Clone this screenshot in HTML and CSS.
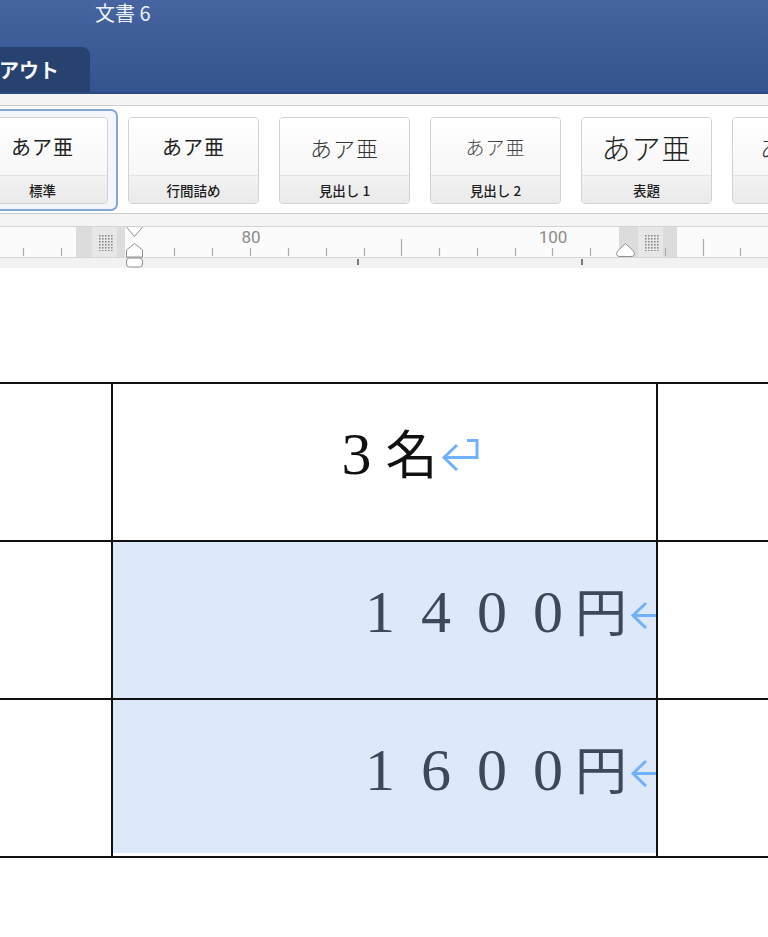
FILE: index.html
```html
<!DOCTYPE html>
<html lang="ja">
<head>
<meta charset="utf-8">
<title>文書 6</title>
<link rel="stylesheet" href="styles.css">
</head>
<body>
<header class="titlebar">
  <div class="title">文書 6</div>
  <nav class="tabs"><div class="tab">アウト</div></nav>
</header>

<div class="ribbon-head"></div>
<section class="styles">
  <div class="selected">
    <div class="card">
      <div class="sample s-normal">あア亜</div>
      <div class="label">標準</div>
    </div>
  </div>
  <div class="card">
    <div class="sample s-normal">あア亜</div>
    <div class="label">行間詰め</div>
  </div>
  <div class="card">
    <div class="sample s-h1">あア亜</div>
    <div class="label">見出し 1</div>
  </div>
  <div class="card">
    <div class="sample s-h2">あア亜</div>
    <div class="label">見出し 2</div>
  </div>
  <div class="card">
    <div class="sample s-title">あア亜</div>
    <div class="label">表題</div>
  </div>
  <div class="card">
    <div class="sample s-sub">あア亜</div>
    <div class="label">副題</div>
  </div>
</section>
<div class="ruler-head"></div>

<svg class="ruler" width="768" height="42" viewBox="0 0 768 42">
  <defs>
    <pattern id="grip" width="3" height="3" patternUnits="userSpaceOnUse">
      <rect width="1.6" height="1.6" fill="#8c8c8c"/>
    </pattern>
  </defs>
  <rect width="768" height="42" fill="#f2f2f2"/>
  <rect y="1" width="768" height="30" fill="#fbfbfb"/>
  <line x1="0" y1="0.5" x2="768" y2="0.5" stroke="#d3d3d3"/>
  <line x1="0" y1="31.5" x2="768" y2="31.5" stroke="#d6d6d6"/>

  <!-- left margin -->
  <rect x="76" y="1" width="49" height="30" fill="#dcdcdc"/>
  <rect x="92" y="1" width="25" height="30" fill="#e7e7e7"/>
  <rect x="98" y="8" width="15" height="17" fill="url(#grip)"/>
  <!-- right margin -->
  <rect x="619" y="1" width="58" height="30" fill="#dcdcdc"/>
  <rect x="638" y="1" width="25" height="30" fill="#e7e7e7"/>
  <rect x="644" y="8" width="15" height="17" fill="url(#grip)"/>

  <!-- ticks -->
  <g stroke="#acacac" stroke-width="1.2">
    <line x1="23.5" y1="22" x2="23.5" y2="30"/>
    <line x1="61.5" y1="22" x2="61.5" y2="30"/>
    <line x1="174.5" y1="22" x2="174.5" y2="30"/>
    <line x1="212.5" y1="22" x2="212.5" y2="30"/>
    <line x1="250.5" y1="22" x2="250.5" y2="30"/>
    <line x1="288.5" y1="22" x2="288.5" y2="30"/>
    <line x1="326.5" y1="22" x2="326.5" y2="30"/>
    <line x1="364.5" y1="22" x2="364.5" y2="30"/>
    <line x1="401.5" y1="13" x2="401.5" y2="30"/>
    <line x1="439.5" y1="22" x2="439.5" y2="30"/>
    <line x1="477.5" y1="22" x2="477.5" y2="30"/>
    <line x1="515.5" y1="22" x2="515.5" y2="30"/>
    <line x1="552.5" y1="22" x2="552.5" y2="30"/>
    <line x1="590.5" y1="22" x2="590.5" y2="30"/>
    <line x1="665.5" y1="22" x2="665.5" y2="30"/>
    <line x1="703.5" y1="13" x2="703.5" y2="30"/>
    <line x1="740.5" y1="22" x2="740.5" y2="30"/>
  </g>
  <g class="ruler-num" text-anchor="middle">
    <text x="251" y="17">80</text>
    <text x="553" y="17">100</text>
  </g>

  <!-- indent handles -->
  <g fill="#fff" stroke="#8e8e8e" stroke-width="1" stroke-linejoin="round">
    <path d="M126.5 1 L134.5 10.5 L142.5 1"/>
    <path d="M134.5 17.5 L142.5 24 V31 H126.5 V24 Z"/>
    <rect x="126.5" y="32" width="16" height="9" rx="3"/>
    <path d="M625.5 17.5 L633.5 25 Q636 30.5 631 30.5 H620 Q615 30.5 617.5 25 Z"/>
  </g>
  <!-- column markers -->
  <rect x="357" y="33" width="2" height="6" fill="#7a7a7a"/>
  <rect x="581" y="33" width="2" height="6" fill="#7a7a7a"/>
</svg>

<main class="doc">
  <div class="table">
    <div class="row">
      <div class="cell"></div>
      <div class="cell mid center">
        <span class="line"><span class="num n-one">3</span><span class="cj">名</span><svg class="ret" width="38" height="33" viewBox="0 0 38 33"><path d="M26 2.5 H36 V19.5 H3 M16 7 L3 19.5 L16 32" fill="none" stroke="#6fb1fb" stroke-width="3"/></svg></span>
      </div>
      <div class="cell"></div>
    </div>
    <div class="row">
      <div class="cell"></div>
      <div class="cell mid right sel">
        <span class="line"><span class="num n-many">140</span><span class="num n-last">0</span><span class="cj">円</span><svg class="ret" width="38" height="33" viewBox="0 0 38 33"><path d="M26 2.5 H36 V19.5 H3 M16 7 L3 19.5 L16 32" fill="none" stroke="#6fb1fb" stroke-width="3"/></svg></span>
      </div>
      <div class="cell"></div>
    </div>
    <div class="row">
      <div class="cell"></div>
      <div class="cell mid right sel">
        <span class="line"><span class="num n-many">160</span><span class="num n-last">0</span><span class="cj">円</span><svg class="ret" width="38" height="33" viewBox="0 0 38 33"><path d="M26 2.5 H36 V19.5 H3 M16 7 L3 19.5 L16 32" fill="none" stroke="#6fb1fb" stroke-width="3"/></svg></span>
      </div>
      <div class="cell"></div>
    </div>
  </div>
</main>
</body>
</html>
```

FILE: styles.css
```css
* { box-sizing: border-box; }

html, body { margin: 0; padding: 0; }

body {
  width: 768px;
  height: 937px;
  overflow: hidden;
  background: #fff;
  font-family: "Noto Sans CJK JP", "Noto Sans", sans-serif;
}

/* window title + tab strip */
.titlebar {
  height: 94px;
  background: linear-gradient(#4564a0, #33548f);
  border-bottom: 2px solid #2b4a80;
}
.title {
  padding: 1px 0 0 95px;
  font-size: 20px;
  line-height: 23px;
  color: #eef2f8;
}
.tabs {
  display: flex;
  margin-top: 23px;
}
.tab {
  width: 91px;
  height: 45px;
  background: #28426f;
  border-top-right-radius: 8px;
  color: #f4f6fa;
  font-size: 20px;
  font-weight: 700;
  line-height: 45px;
  margin-left: -1px;
  white-space: nowrap;
}

/* style gallery */
.ribbon-head {
  height: 12px;
  background: #f4f4f4;
  border-bottom: 1px solid #cfcfcf;
}
.styles {
  height: 108px;
  padding-top: 11px;
  display: flex;
  align-items: flex-start;
  gap: 20px;
  background: #fff;
  border-bottom: 1px solid #cdcdcd;
  overflow: hidden;
}
.selected {
  flex: none;
  margin: -8px -10px 0 -32px;
  padding: 7px 8px 5px 8px;
  border: 2px solid #86a6d8;
  border-radius: 7px;
  background: #f3f6fb;
}
.card {
  flex: none;
  width: 131px;
  height: 87px;
  border: 1px solid #d2d2d2;
  border-radius: 4px;
  overflow: hidden;
  background: #fff;
  display: flex;
  flex-direction: column;
}
.selected .card { margin: -1px 0 0 -1px; }
.sample {
  height: 57px;
  display: flex;
  align-items: center;
  justify-content: center;
  background: linear-gradient(#ffffff, #f7f7f7);
  color: #222;
  white-space: nowrap;
  letter-spacing: 1px;
}
.s-normal { font-size: 20px; }
.s-h1 { font-size: 22px; font-weight: 300; color: #333; }
.s-h2 { font-size: 19px; font-weight: 300; color: #444; }
.s-title { font-size: 29px; font-weight: 300; color: #222; }
.s-sub { font-size: 24px; font-weight: 300; color: #333; }
.label {
  flex: 1;
  border-top: 1px solid #e3e3e3;
  background: linear-gradient(#f2f2f2, #eaeaea);
  display: flex;
  align-items: center;
  justify-content: center;
  font-size: 13.5px;
  font-weight: 500;
  color: #1c1c1c;
  white-space: nowrap;
}

.ruler-head {
  height: 12px;
  background: #f4f4f4;
}
.ruler { display: block; }
.ruler-num {
  font-family: Roboto, "Noto Sans", sans-serif;
  font-size: 17px;
  fill: #8b8b8b;
}

/* document table */
.doc { padding-top: 114px; }
.table { border-top: 2px solid #111; }
.row {
  display: grid;
  grid-template-columns: 111px 547px 1fr;
  height: 158px;
  border-bottom: 2px solid #111;
}
.cell { min-width: 0; }
.mid {
  border-left: 2px solid #111;
  border-right: 2px solid #111;
  display: flex;
  align-items: center;
  overflow: hidden;
}
.center { justify-content: center; padding-left: 10px; }
.right { justify-content: flex-end; padding-right: 29px; }
.sel { background: linear-gradient(#dee8fb, #dee8fb) no-repeat 0 0 / 100% 100%; color: #3e4859; }
.row:last-child .sel { background-size: 100% 153px; }

.line {
  white-space: nowrap;
  line-height: 60px;
  margin-top: -6px;
}
.num {
  font-family: "Liberation Serif", "DejaVu Serif", serif;
  font-size: 60px;
}
.n-one { letter-spacing: 14px; color: #111; }
.n-many { letter-spacing: 26px; }
.n-last { letter-spacing: 12px; }
.cj {
  font-family: "Noto Sans CJK JP", sans-serif;
  font-size: 52px;
}
.center .cj { color: #111; }
.ret {
  vertical-align: 3px;
  margin-left: 3px;
  margin-right: -41px;
}
```
